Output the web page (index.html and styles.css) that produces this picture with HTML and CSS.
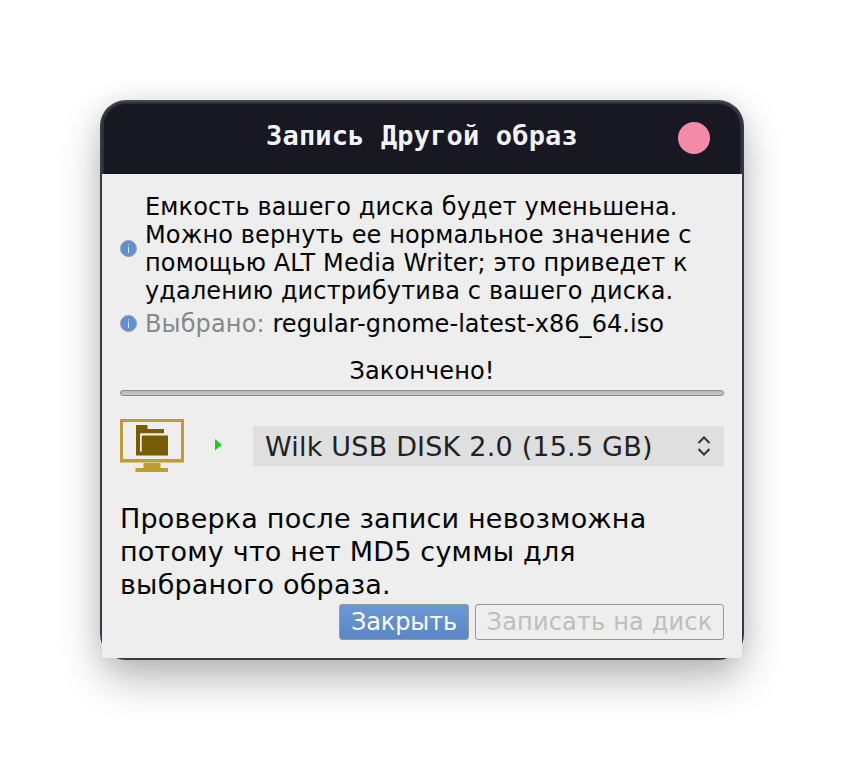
FILE: index.html
```html
<!DOCTYPE html>
<html lang="ru">
<head>
<meta charset="utf-8">
<title>Запись Другой образ</title>
<link rel="stylesheet" href="styles.css">
</head>
<body>
<main class="window">
  <header class="titlebar"><h1>Запись Другой образ</h1><button class="close" aria-label="Закрыть"></button></header>
  <div class="content">
    <section class="notice">
      <svg class="info" viewBox="0 0 18 18"><circle cx="8.5" cy="8.5" r="8" fill="#5f90d4" stroke="#999da5"/><path d="M8.5 7v6M8.5 4.3v1.2" stroke="#dce7f7"/></svg>
      <p>Емкость вашего диска будет уменьшена.<br>Можно вернуть ее нормальное значение с<br>помощью ALT Media Writer; это приведет к<br>удалению дистрибутива с вашего диска.</p>
    </section>
    <section class="notice selected">
      <svg class="info" viewBox="0 0 18 18"><circle cx="8.5" cy="8.5" r="8" fill="#5f90d4" stroke="#999da5"/><path d="M8.5 7v6M8.5 4.3v1.2" stroke="#dce7f7"/></svg>
      <p><span class="muted">Выбрано:</span> <span class="file">regular-gnome-latest-x86_64.iso</span></p>
    </section>
    <p class="status">Закончено!</p>
    <div class="progress"></div>
    <section class="device">
      <svg class="monitor" viewBox="0 0 64 54"><path fill="#bd9f2f" fill-rule="evenodd" d="M0 0h64v43.500H0zM3 3v37h58V3zM23.500 43h17v6h7.500v4H15.500v-4h8z"/><path fill="#765d00" d="M16 6h11.500v4H44v4.500H20V32.500h1.500V16.500H48v20H16z"/><path d="M21 32.500V15H44" fill="none" stroke="#efefef"/></svg>
      <svg class="arrow" viewBox="0 0 7 12"><path fill="#00e000" d="M0 0l6.500 5.750L0 11.500z"/></svg>
      <div class="select"><span>Wilk USB DISK 2.0 (15.5 GB)</span><svg class="chevrons" viewBox="0 0 14 20"><path d="M1.500 7L7 1.500 12.500 7M1.500 13L7 18.500 12.500 13" fill="none" stroke="#333" stroke-width="2"/></svg></div>
    </section>
    <p class="message">Проверка после записи невозможна<br>потому что нет MD5 суммы для<br>выбраного образа.</p>
    <div class="actions"><button class="btn primary">Закрыть</button><button class="btn" disabled>Записать на диск</button></div>
  </div>
</main>
</body>
</html>
```
FILE: styles.css
```css
*{box-sizing:border-box}
body{margin:0;height:760px;background:#fff;font-family:"DejaVu Sans",sans-serif;color:#000;overflow:hidden}
p,h1{margin:0;white-space:nowrap}
svg{display:block;flex:none}
.window{width:644px;height:560px;margin:100px;border:2px solid #3a3a45;border-top-color:#484852;border-radius:26px;background:#3a3a45;box-shadow:0 20px 40px rgba(0,0,0,.27),0 0 24px rgba(0,0,0,.08)}
.titlebar{height:72px;border:2px solid #2e2e39;border-bottom:0;border-radius:24px 24px 0 0;background:#181823;display:grid;grid-template-columns:1fr 32px;align-items:center;padding:0 30px 0 30px;color:#f2f2fa}
.titlebar h1{font:bold 27px/30px "DejaVu Sans Mono",monospace;letter-spacing:.16px;text-align:center;padding-left:32px;margin-top:-6px}
.close{width:32px;height:32px;border:0;border-radius:50%;background:#f38ba8;padding:0;margin-top:-2px}
.content{height:484px;background:#eee;padding:19px 18px 0}
.notice{display:flex;align-items:center;gap:7px;font-size:24px;letter-spacing:.13px;line-height:28px}
.selected{margin-top:5px}
.info{width:18px;height:18px}
.muted{color:#888}
.file{letter-spacing:.06px}
.status{text-align:center;font-size:24px;letter-spacing:.1px;line-height:28px;margin-top:19px}
.progress{height:6px;margin-top:5px;border:1px solid #888;border-radius:3px;background:linear-gradient(#b8b8b8,#c8c8c8)}
.device{display:flex;align-items:center;height:54px;margin-top:23px}
.monitor{width:64px;height:54px}
.arrow{width:7px;height:12px;margin:-3px 31px 0}
.select{flex:1;height:40px;background:#dfdfdf;display:flex;align-items:center;justify-content:space-between;padding:0 13px 0 12px;font-size:27px;letter-spacing:.2px;color:#222}
.chevrons{width:14px;height:20px}
.message{font-size:27px;letter-spacing:.2px;line-height:33px;margin-top:29px}
.actions{display:flex;justify-content:flex-end;gap:6px;margin-top:3px}
.btn{height:36px;border:1px solid #999;border-radius:3px;background:#eee;color:#bebebe;font:24px "DejaVu Sans",sans-serif;letter-spacing:.18px;width:249px;padding:0;white-space:nowrap}
.primary{width:130px;background:linear-gradient(#6b98d5,#5a86c5);color:#fff;letter-spacing:-.1px}
```
